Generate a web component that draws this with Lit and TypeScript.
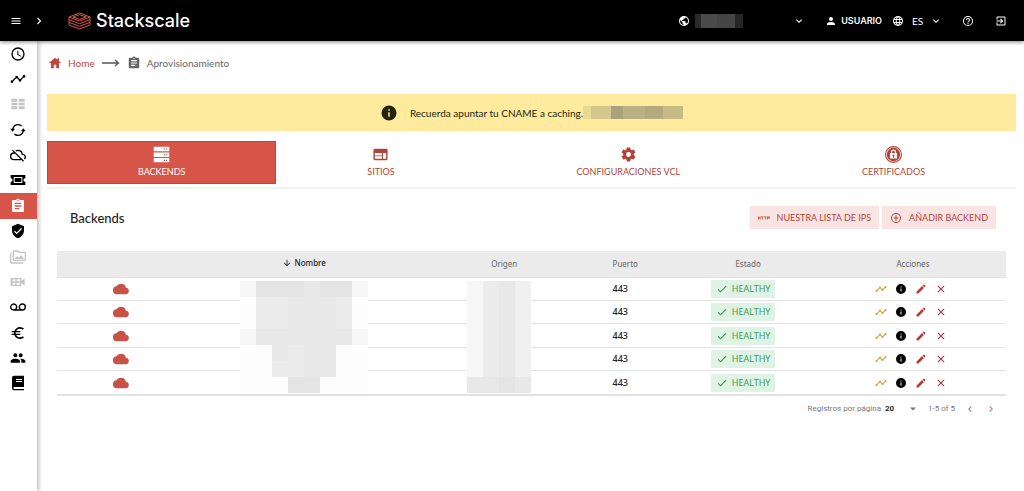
import { LitElement, html, css, svg } from "lit";
import { customElement, property } from "lit/decorators.js";

const PATHS: Record<string, string> = {
  menu: "M3 6h18v2H3V6m0 5h18v2H3v-2m0 5h18v2H3v-2z",
  right: "M8.6 16.6 13.2 12 8.6 7.4 10 6l6 6-6 6-1.4-1.4z",
  left: "M15.4 16.6 10.8 12l4.6-4.6L14 6l-6 6 6 6 1.4-1.4z",
  down: "M7.4 8.6 12 13.2l4.6-4.6L18 10l-6 6-6-6 1.4-1.4z",
  caret: "M6 9l6 6 6-6z",
  earth: "M17.9 17.39c-.26-.8-1.01-1.39-1.9-1.39h-1v-3a1 1 0 0 0-1-1H8v-2h2a1 1 0 0 0 1-1V7h2a2 2 0 0 0 2-2v-.41a7.984 7.984 0 0 1 2.9 12.8M11 19.93c-3.95-.49-7-3.85-7-7.93 0-.62.08-1.22.21-1.79L9 15v1a2 2 0 0 0 2 2m1-16A10 10 0 1 0 22 12 10 10 0 0 0 12 2z",
  web: "M16.36 14c.08-.66.14-1.32.14-2s-.06-1.34-.14-2h3.38c.16.64.26 1.31.26 2s-.1 1.36-.26 2m-5.15 5.56c.6-1.11 1.06-2.31 1.38-3.56h2.95a8.03 8.03 0 0 1-4.33 3.56M14.34 14H9.66c-.1-.66-.16-1.32-.16-2s.06-1.35.16-2h4.68c.09.65.16 1.32.16 2s-.07 1.34-.16 2M12 19.96c-.83-1.2-1.5-2.53-1.91-3.96h3.82c-.41 1.43-1.08 2.76-1.91 3.96M8 8H5.08A7.92 7.92 0 0 1 9.4 4.44C8.8 5.55 8.35 6.75 8 8m-2.92 8H8c.35 1.25.8 2.45 1.4 3.56A8 8 0 0 1 5.08 16m-.82-2C4.1 13.36 4 12.69 4 12s.1-1.36.26-2h3.38c-.08.66-.14 1.32-.14 2s.06 1.34.14 2M12 4.03c.83 1.2 1.5 2.54 1.91 3.97h-3.82c.41-1.43 1.08-2.77 1.91-3.97M18.92 8h-2.95a15.65 15.65 0 0 0-1.38-3.56c1.84.63 3.37 1.9 4.33 3.56M12 2a10 10 0 1 0 10 10A10 10 0 0 0 12 2z",
  person: "M12 4a4 4 0 1 1 0 8 4 4 0 0 1 0-8m0 10c4.42 0 8 1.79 8 4v2H4v-2c0-2.21 3.58-4 8-4z",
  help: "M11 18h2v-2h-2v2m1-16a10 10 0 1 0 0 20 10 10 0 0 0 0-20m0 18a8 8 0 1 1 0-16 8 8 0 0 1 0 16m0-14a4 4 0 0 0-4 4h2a2 2 0 1 1 4 0c0 2-3 1.75-3 5h2c0-2.25 3-2.5 3-5a4 4 0 0 0-4-4z",
  exit: "M10.1 15.6 11.5 17l5-5-5-5-1.4 1.4 2.6 2.6H3v2h9.7l-2.6 2.6M19 3H5a2 2 0 0 0-2 2v4h2V5h14v14H5v-4H3v4a2 2 0 0 0 2 2h14a2 2 0 0 0 2-2V5a2 2 0 0 0-2-2z",
  clock: "M12 20a8 8 0 1 0 0-16 8 8 0 0 0 0 16m0-18a10 10 0 1 1 0 20 10 10 0 0 1 0-20m.5 5v5.25l4.5 2.67-.75 1.23L11 13V7h1.5z",
  timeline: "M23 8a2 2 0 0 1-2.5 1.93l-3.56 3.55A2 2 0 1 1 13.07 13.5l-2.55-2.56a2 2 0 0 1-1.04 0l-4.55 4.56A2 2 0 1 1 3.5 14.07l4.56-4.55a2 2 0 1 1 3.86 0l2.55 2.56a2 2 0 0 1 1.04 0l3.56-3.56A2 2 0 1 1 23 8z",
  grid: "M2 4h9v4.5H2V4m11 0h9v4.5h-9V4M2 10h9v4H2v-4m11 0h9v4h-9v-4M2 15.500h9V20H2v-4.500m11 0h9V20h-9v-4.500z",
  sync: "M12 5c-3.300 0-6 2.300-6.800 5.300L7.500 10.300 4 14.500.5 10.300h2.600C4 6 7.600 3 12 3c2.300 0 4.400.8 6 2.300l-1.500 1.400A6.900 6.900 0 0 0 12 5m0 14c3.300 0 6-2.300 6.800-5.300h-2.300L20 9.500l3.500 4.200h-2.600C20 18 16.400 21 12 21c-2.300 0-4.400-.8-6-2.300l1.500-1.400A6.900 6.900 0 0 0 12 19z",
  cloudoff: "M19.35 10.040A7.490 7.490 0 0 0 12 4c-1.480 0-2.850.430-4.010 1.170l1.460 1.460A5.497 5.497 0 0 1 17.500 11.500v.5H19a3 3 0 0 1 1.790 5.400l1.420 1.420A5 5 0 0 0 19.350 10.040M3 5.270l2.750 2.740A5.994 5.994 0 0 0 6 20h11.730l2 2L21 20.730 4.270 4 3 5.270M7.730 10l8 8H6a4 4 0 0 1 0-8h1.730z",
  ticket: "M1 4.500h22v4.700a2.800 2.800 0 0 0 0 5.600v4.700H1v-4.700a2.800 2.800 0 0 0 0-5.600V4.500M5.500 7.500v9h13v-9h-13M7 9h10v6H7v-6z",
  clipboard: "M19 3h-4.180a3 3 0 0 0-5.640 0H5a2 2 0 0 0-2 2v14a2 2 0 0 0 2 2h14a2 2 0 0 0 2-2V5a2 2 0 0 0-2-2m-7 0a1 1 0 1 1 0 2 1 1 0 0 1 0-2m2 14H7v-2h7v2m3-4H7v-2h10v2m0-4H7V7h10v2z",
  shield: "M12 1 3 5v6c0 5.550 3.840 10.740 9 12 5.160-1.260 9-6.450 9-12V5l-9-4m-2 16-4-4 1.410-1.410L10 14.170l6.590-6.590L18 9l-8 8z",
  folder: "M22 4h-8l-2-2H6a2 2 0 0 0-2 2v12a2 2 0 0 0 2 2h16a2 2 0 0 0 2-2V6a2 2 0 0 0-2-2m0 12H6V4h5.200l2 2H22v10M2 6H0v14a2 2 0 0 0 2 2h18v-2H2V6m5 9h14l-4.500-6-3.500 4.500-2.500-3L7 15z",
  video: "M1 6h16v4.500l5-4v11l-5-4V18H1V6m3 2v3h4V8H4m6 0v3h5V8h-5m-6 5v3h4v-3H4m6 0v3h5v-3h-5z",
  voicemail: "M18.500 6.500a5.500 5.500 0 0 0-4.300 9H9.800A5.500 5.500 0 1 0 5.500 17.500h13a5.500 5.500 0 0 0 0-11m-13 9a3.500 3.500 0 1 1 0-7 3.500 3.500 0 0 1 0 7m13 0a3.500 3.500 0 1 1 0-7 3.500 3.500 0 0 1 0 7z",
  euro: "M15 18.500c-2.510 0-4.680-1.420-5.760-3.500H15l1-2H8.580a6.700 6.700 0 0 1 0-2H15l1-2H9.240A6.491 6.491 0 0 1 15 5.500c1.610 0 3.090.590 4.230 1.570L21 5.300A8.955 8.955 0 0 0 15 3c-3.920 0-7.240 2.510-8.480 6H3l-1 2h4.060a8.300 8.300 0 0 0 0 2H3l-1 2h4.520A9 9 0 0 0 21 18.700l-1.780-1.770A6.450 6.450 0 0 1 15 18.500z",
  group: "M16 11a3 3 0 1 0 0-6 3 3 0 0 0 0 6m-8 0a3 3 0 1 0 0-6 3 3 0 0 0 0 6m0 2c-2.330 0-7 1.170-7 3.500V19h14v-2.500C15 14.170 10.330 13 8 13m8 0-.97.050c1.160.840 1.970 1.970 1.970 3.450V19h6v-2.500c0-2.330-4.670-3.500-7-3.500z",
  book: "M6 1a3 3 0 0 0-3 3v16a3 3 0 0 0 3 3h15v-2H6.500a1.200 1.200 0 0 1 0-3H21V1H6m3 5h9v1.500H9V6m0 3h9v1.500H9V9z",
  home: "M12 3 1.500 12H5v9h5v-6h4v6h5v-9h3.500L19 9V4h-3v2.400L12 3z",
  info: "M13 9h-2V7h2m0 10h-2v-6h2m-1-9a10 10 0 1 0 0 20 10 10 0 0 0 0-20z",
  servers: "M1 1h22v6.500H1V1m0 8h22v6.500H1V9m0 8h22v6H1v-6M15 3.500v1.500h2V3.500h-2m3 0v1.500h2V3.500h-2m-3 8v1.500h2v-1.500h-2m3 0v1.500h2v-1.500h-2m-3 8v1.500h2v-1.500h-2m3 0v1.500h2v-1.500h-2z",
  site: "M20 4H4a2 2 0 0 0-2 2v12a2 2 0 0 0 2 2h16a2 2 0 0 0 2-2V6a2 2 0 0 0-2-2m-6 14H4v-3.500h10V18m0-4.500H4V10h10v3.500m6 4.500h-4.500v-8H20v8z",
  gear: "M12 15.500a3.500 3.500 0 1 1 0-7 3.500 3.500 0 0 1 0 7m7.430-2.530a7.800 7.800 0 0 0 0-1.940l2.110-1.630c.19-.15.24-.42.12-.64l-2-3.460c-.12-.22-.39-.31-.61-.22l-2.490 1c-.52-.39-1.060-.73-1.690-.98l-.37-2.650A.506.506 0 0 0 14 2h-4c-.25 0-.46.18-.5.42l-.37 2.650c-.63.25-1.170.59-1.690.98l-2.490-1c-.22-.09-.49 0-.61.22l-2 3.460c-.13.22-.07.49.12.64l2.110 1.630a7.930 7.930 0 0 0 0 1.940l-2.110 1.690c-.19.15-.25.42-.12.64l2 3.460c.12.22.39.3.61.22l2.490-1.010c.52.4 1.060.74 1.690.99l.37 2.650c.04.24.25.42.5.42h4c.25 0 .46-.18.5-.42l.37-2.650c.63-.26 1.170-.59 1.690-.99l2.490 1.010c.22.08.49 0 .61-.22l2-3.460c.12-.22.07-.49-.12-.64l-2.110-1.690z",
  lock: "M12 0a12 12 0 1 1 0 24 12 12 0 0 1 0-24m0 1.600a10.400 10.400 0 1 0 0 20.800 10.400 10.400 0 0 0 0-20.800m0 1a9.400 9.400 0 1 1 0 18.800 9.400 9.400 0 0 1 0-18.800m0 2.400a3.600 3.600 0 0 0-3.600 3.600V10H7v7.500h10V10h-1.400V8.600A3.600 3.600 0 0 0 12 5m0 1.700c1.100 0 2 .8 2 1.900V10h-4V8.600c0-1.100.9-1.900 2-1.900m0 5.300a1.500 1.500 0 0 1 .7 2.800V16.500h-1.400v-1.700A1.500 1.500 0 0 1 12 12z",
  pluscircle: "M12 20a8 8 0 1 1 0-16 8 8 0 0 1 0 16m0-18a10 10 0 1 0 0 20 10 10 0 0 0 0-20m1 5h-2v4H7v2h4v4h2v-4h4v-2h-4V7z",
  http: "M0 9h1.500v2H3.500V9H5v6H3.500v-2.500h-2V15H0V9m6 0h5v1.500H9.250V15h-1.500v-4.500H6V9m6 0h5v1.500h-1.750V15h-1.500v-4.500H12V9m6 0h4.500A1.500 1.500 0 0 1 24 10.500v1a1.500 1.500 0 0 1-1.500 1.500h-3v2H18V9m1.500 1.500v1h3v-1h-3z",
  cloud: "M19.350 10.040A7.490 7.490 0 0 0 12 4C9.110 4 6.600 5.640 5.350 8.040A5.994 5.994 0 0 0 6 20h13a5 5 0 0 0 .35-9.960z",
  arrowdown: "M11 4h2v12l5.500-5.500 1.420 1.420L12 19.840l-7.920-7.920L5.500 10.500 11 16V4z",
  check: "M21 7 9 19l-5.500-5.500 1.410-1.410L9 16.170 19.590 5.590 21 7z",
  pencil: "M20.710 7.040a1 1 0 0 0 0-1.410l-2.340-2.340a1 1 0 0 0-1.410 0l-1.840 1.830 3.750 3.750M3 17.250V21h3.750L17.810 9.930l-3.750-3.750L3 17.250z",
  close: "M19 6.410 17.590 5 12 10.590 6.410 5 5 6.410 10.590 12 5 17.590 6.410 19 12 13.410 17.590 19 19 17.590 13.410 12z",
};

@customElement("ui-icon")
export class UiIcon extends LitElement {
  static styles = css`
    :host { display: inline-flex; width: 16px; height: 16px; flex: none; }
    svg { width: 100%; height: 100%; fill: currentColor; fill-rule: evenodd; }
  `;
  @property() name = "";
  render() {
    return html`<svg viewBox="0 0 24 24" aria-hidden="true"><path d=${PATHS[this.name] ?? ""}></path></svg>`;
  }
}

/* Greyed-out blocks that hide private values: one string per row, one letter per tile. */
const SHADES: Record<string, string> = {
  a: "#fdfdfd", b: "#f7f7f7", c: "#f0f0f0", d: "#ececec", e: "#e8e8e8", f: "#e4e4e4",
};

@customElement("masked-area")
export class MaskedArea extends LitElement {
  static styles = css`
    :host { display: block; }
    svg { display: block; }
  `;
  @property({ attribute: false }) rows: string[] = [];
  render() {
    const w = this.rows[0].length * 16;
    const h = this.rows.length * 16;
    return html`<svg width=${w} height=${h} shape-rendering="crispEdges" aria-hidden="true">
      ${this.rows.map((r, y) => [...r].map((c, x) => svg`<rect x=${x * 16} y=${y * 16} width="16" height="16" fill=${SHADES[c]}></rect>`))}
    </svg>`;
  }
}

const NAV = [
  ["clock", "Actividad"], ["timeline", "Métricas"], ["grid", "Servidores"], ["sync", "Sincronización"],
  ["cloudoff", "Nube"], ["ticket", "Tickets"], ["clipboard", "Aprovisionamiento"], ["shield", "Seguridad"],
  ["folder", "Archivos"], ["video", "Vídeo"], ["voicemail", "Buzón"], ["euro", "Facturación"],
  ["group", "Usuarios"], ["book", "Documentación"],
];
const MUTED = new Set(["grid", "folder", "video"]);
const TABS = [
  ["servers", "BACKENDS"], ["site", "SITIOS"], ["gear", "CONFIGURACIONES VCL"], ["lock", "CERTIFICADOS"],
];
const NAMES = ["bfffeffb", "addeeeda", "addeeeda", "beeeeeeb", "aaedeeaa", "aaddeeaa", "aaaffaaa"];
const ORIGINS = ["bdec", "bdec", "bdec", "bdec", "bdec", "bdec", "eefe"];

@customElement("app-root")
export class AppRoot extends LitElement {
  static styles = css`
    :host {
      display: block; min-height: 100vh; background: #fff; color: #1d1d1d;
      font-family: Lato, "Liberation Sans", sans-serif; font-size: 10px; line-height: 14px;
    }
    * { box-sizing: border-box; }
    button, select { font: inherit; color: inherit; background: none; border: 0; padding: 0; margin: 0; cursor: pointer; }
    button { display: inline-flex; align-items: center; justify-content: center; }
    select { appearance: none; }
    a { color: inherit; text-decoration: none; }
    .s12 { width: 12px; height: 12px; }
    .s14 { width: 14px; height: 14px; }
    .s10 { width: 10px; height: 10px; }

    .top {
      display: flex; align-items: center; height: 41px; padding: 0 16px 0 10px; background: #000; color: #fff;
      box-shadow: 0 1px 4px rgba(0, 0, 0, 0.5); position: relative; z-index: 2;
    }
    .expand { margin-left: 10px; }
    .brand { display: flex; align-items: center; gap: 5px; margin-left: 22px; font: 500 18px/24px Inter, sans-serif; }
    .brand svg { width: 23px; height: 18px; fill: none; stroke: #d4574c; stroke-width: 1; }
    .spacer { flex: 1; }
    .pick { display: flex; align-items: center; position: relative; }
    .pick .chev { position: absolute; right: 0; pointer-events: none; }
    .domain { gap: 5px; }
    .domain select {
      width: 110px; height: 14px;
      background: linear-gradient(90deg, #2a2a2a 0 6px, #4a4a4a 6px 22px, #444 22px 40px, #262626 40px) no-repeat 0 0 / 48px 14px;
    }
    .user { margin-left: 20px; gap: 4px; font: 600 9px/12px Inter, sans-serif; }
    .lang { margin-left: 10px; gap: 8px; }
    .lang select { width: 30px; }
    .helpbtn { margin-left: 20px; }
    .exitbtn { margin-left: 21px; margin-right: 1px; }

    .body { display: flex; min-height: calc(100vh - 41px); }
    .side { width: 37px; flex: none; box-shadow: 1px 0 5px rgba(0, 0, 0, 0.35); }
    .navlist { display: grid; grid-auto-rows: 1fr; height: 355px; margin: 0; padding: 0; list-style: none; }
    .navlink { display: flex; align-items: center; justify-content: center; height: 100%; padding-right: 2px; color: #000; }
    .navlink ui-icon { width: 16px; height: 16px; }
    .navlink.muted { color: #c4c4c4; }
    .navlink.current { background: #d65448; color: #fff; }

    .main { flex: 1; min-width: 0; padding: 14px 8px 20px 10px; }
    .crumbs { display: flex; align-items: center; gap: 7px; height: 16px; padding-left: 1px; color: #666; }
    .crumb { display: flex; align-items: center; gap: 6px; }
    .crumb.home { color: #c0473d; }
    .trail { width: 18px; height: 8px; fill: none; stroke: #555; stroke-width: 1.300; }
    .note {
      display: flex; align-items: center; justify-content: center; gap: 12px; height: 37px; margin-top: 23px;
      background: #feeb9d; color: #25230f; border-radius: 1px;
    }
    .note ui-icon { width: 18px; height: 18px; }
    .msg { display: flex; align-items: center; }
    .hidden-host {
      width: 100px; height: 13px;
      background: linear-gradient(90deg, #e8d994 0 8px, #d3c78e 8px 28px, #aaa27c 28px 40px, #b9b083 40px 62px, #b3aa7e 62px 80px, #c6bb87 80px);
    }
    .tabs { display: flex; height: 48px; margin-top: 10px; border-bottom: 2px solid #f2f2f2; }
    .tab { flex: 1 1 auto; height: 43px; flex-direction: column; gap: 2px; color: #b04439; font-size: 9px; }
    .tab ui-icon { width: 17px; height: 17px; }
    .tab.on { background: #d65448; color: #fff; box-shadow: inset 0 0 0 1px #b9473c; }
    .bar { display: flex; align-items: center; justify-content: space-between; padding: 17px 20px 0 23px; }
    .title { margin: 0; font: 500 13px/16px Lato, sans-serif; }
    .btns { display: flex; gap: 3px; }
    .soft { height: 23px; padding: 0 8px; gap: 7px; background: #fae4e3; color: #b04439; font-size: 9px; }

    .tablebox { margin: 22px 10px 0; }
    .grid { width: 100%; height: 145px; border-collapse: collapse; table-layout: fixed; border-bottom: 2px solid #e2e2e2; }
    .grid th {
      height: 26px; padding: 0; background: #ebebeb; color: #666; text-align: center;
      font: 400 8px/12px "Noto Sans", sans-serif; 
    }
    .grid th.sortable { padding-left: 10px; }
    .grid th.sorted { padding: 0; color: #222; font-weight: 500; }
    .sortbtn { gap: 2px; }
    .grid td { padding: 0; text-align: center; vertical-align: middle; border-top: 1px solid #e4e4e4; line-height: 0; }
    .c1 { width: 13.400%; } .c2 { width: 25.300%; } .c3 { width: 15.800%; }
    .c4 { width: 9.700%; } .c5 { width: 16.200%; } .c6 { width: 19.600%; }
    .grid td.cover { position: relative; }
    .cover masked-area { position: absolute; top: 3px; left: 50%; transform: translateX(-50%); }
    .cloud { width: 16px; height: 16px; color: #c75247; }
    .port { font: 500 9px/12px "Noto Sans", sans-serif; color: #222; }
    .badge {
      display: inline-flex; align-items: center; gap: 4px; height: 18px; padding: 0 5px; background: #dff3e5;
      color: #3f9a55; font: 400 9px/12px "Noto Sans", sans-serif; border-radius: 1px;
    }
    .acts { display: inline-flex; gap: 8px; padding-right: 4px; }
    .gold { color: #d0a02c; } .ink { color: #000; } .red { color: #b93a32; } .wine { color: #9c2f3c; }
    .pager {
      display: flex; align-items: center; justify-content: flex-end; gap: 9px; padding: 7px 9px 0 0;
      color: #777; font: 400 8px/12px Roboto, sans-serif;
    }
    .size { display: flex; align-items: center; gap: 4px; position: relative; }
    .size select { width: 34px; color: #111; font-weight: 600; }
    .size ui-icon { position: absolute; right: 0; pointer-events: none; }
    .step { width: 12px; color: #888; }
    .next { color: #b5766f; }
  `;

  render() {
    return html`
      <header class="top">
        <button aria-label="Menú"><ui-icon class="s12" name="menu"></ui-icon></button>
        <button class="expand" aria-label="Expandir"><ui-icon class="s14" name="right"></ui-icon></button>
        <a class="brand" href="#">
          <svg viewBox="0 0 23 18" aria-hidden="true">
            <path d="M1 5 11.500 1 22 5 11.500 9zM5 5l6.500-2.400L18 5l-6.500 2.400zM1 5v8l10.500 4L22 13V5M1 7.700l10.500 4 10.500-4M1 10.300l10.500 4 10.500-4"></path>
          </svg>
          <span>Stackscale</span>
        </a>
        <span class="spacer"></span>
        <label class="pick domain">
          <ui-icon class="s12" name="earth"></ui-icon>
          <select aria-label="Dominio"><option></option></select>
          <ui-icon class="s12 chev" name="down"></ui-icon>
        </label>
        <button class="user"><ui-icon class="s12" name="person"></ui-icon>USUARIO</button>
        <label class="pick lang">
          <ui-icon class="s12" name="web"></ui-icon>
          <select aria-label="Idioma"><option>ES</option></select>
          <ui-icon class="s12 chev" name="down"></ui-icon>
        </label>
        <button class="helpbtn" aria-label="Ayuda"><ui-icon class="s12" name="help"></ui-icon></button>
        <button class="exitbtn" aria-label="Salir"><ui-icon class="s12" name="exit"></ui-icon></button>
      </header>
      <div class="body">
        <nav class="side">
          <ul class="navlist">
            ${NAV.map(([icon, label]) => html`<li>
              <a class="navlink ${MUTED.has(icon) ? "muted" : ""} ${icon === "clipboard" ? "current" : ""}" href="#" aria-label=${label}>
                <ui-icon name=${icon}></ui-icon>
              </a></li>`)}
          </ul>
        </nav>
        <main class="main">
          <nav class="crumbs">
            <a class="crumb home" href="#"><ui-icon class="s14" name="home"></ui-icon>Home</a>
            <svg class="trail" viewBox="0 0 18 8" aria-hidden="true"><path d="M0 4h16M13 1l3.500 3L13 7"></path></svg>
            <a class="crumb" href="#"><ui-icon class="s14" name="clipboard"></ui-icon>Aprovisionamiento</a>
          </nav>
          <div class="note">
            <ui-icon name="info"></ui-icon>
            <span class="msg">Recuerda apuntar tu CNAME a caching.<span class="hidden-host"></span></span>
          </div>
          <div class="tabs" role="tablist">
            ${TABS.map(([icon, label], i) => html`<button class="tab ${i === 0 ? "on" : ""}" role="tab" aria-selected=${i === 0}>
              <ui-icon name=${icon}></ui-icon>${label}</button>`)}
          </div>
          <div class="bar">
            <h1 class="title">Backends</h1>
            <div class="btns">
              <button class="soft"><ui-icon class="s12" name="http"></ui-icon>NUESTRA LISTA DE IPS</button>
              <button class="soft"><ui-icon class="s12" name="pluscircle"></ui-icon>AÑADIR BACKEND</button>
            </div>
          </div>
          <div class="tablebox">
            <table class="grid">
              <thead><tr>
                <th class="c1"></th>
                <th class="c2 sorted" aria-sort="descending"><button class="sortbtn"><ui-icon class="s10" name="arrowdown"></ui-icon>Nombre</button></th>
                <th class="c3 sortable">Origen</th>
                <th class="c4 sortable">Puerto</th>
                <th class="c5 sortable">Estado</th>
                <th class="c6">Acciones</th>
              </tr></thead>
              <tbody>
                ${[0, 1, 2, 3, 4].map((i) => html`<tr>
                  <td><ui-icon class="cloud" name="cloud"></ui-icon></td>
                  <td class=${i === 0 ? "cover" : ""}>${i === 0 ? html`<masked-area .rows=${NAMES}></masked-area>` : ""}</td>
                  <td class=${i === 0 ? "cover" : ""}>${i === 0 ? html`<masked-area .rows=${ORIGINS}></masked-area>` : ""}</td>
                  <td class="port">443</td>
                  <td><span class="badge"><ui-icon class="s12" name="check"></ui-icon>HEALTHY</span></td>
                  <td><span class="acts">
                    <button class="gold" aria-label="Métricas"><ui-icon class="s12" name="timeline"></ui-icon></button>
                    <button class="ink" aria-label="Información"><ui-icon class="s12" name="info"></ui-icon></button>
                    <button class="red" aria-label="Editar"><ui-icon class="s12" name="pencil"></ui-icon></button>
                    <button class="wine" aria-label="Eliminar"><ui-icon class="s12" name="close"></ui-icon></button>
                  </span></td>
                </tr>`)}
              </tbody>
            </table>
            <div class="pager">
              <label class="size">Registros por página
                <select><option>20</option></select>
                <ui-icon class="s12" name="caret"></ui-icon>
              </label>
              <span>1-5 of 5</span>
              <button class="step" aria-label="Anterior"><ui-icon class="s12" name="left"></ui-icon></button>
              <button class="step next" aria-label="Siguiente"><ui-icon class="s12" name="right"></ui-icon></button>
            </div>
          </div>
        </main>
      </div>
    `;
  }
}
